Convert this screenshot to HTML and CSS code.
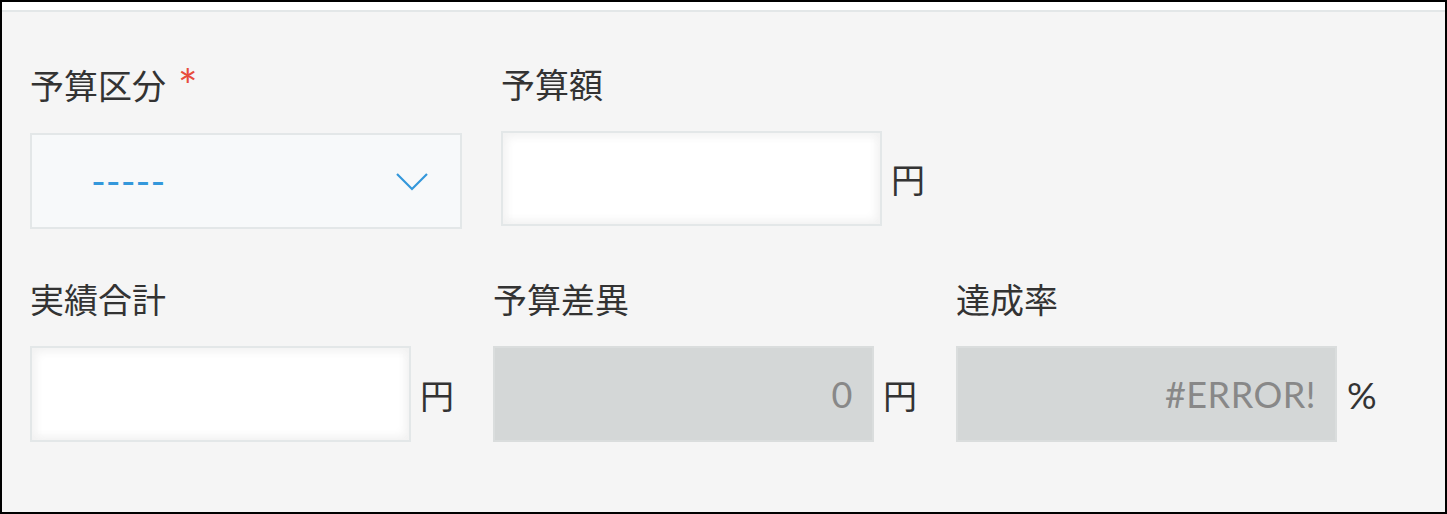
FILE: index.html
```html
<!DOCTYPE html>
<html lang="ja">
<head>
    <meta charset="UTF-8">
    <title>予算フォーム</title>
    <link rel="stylesheet" href="styles.css">
</head>
<body>
    <div class="frame">
        <div class="topbar"></div>
        <div class="form">
            <div class="row">
                <div class="field field-select">
                    <div class="label label-raised">予算区分<span class="required">*</span></div>
                    <div class="control">
                        <div class="select">
                            <span class="select-value">-----</span>
                            <svg class="chevron" width="32" height="18" viewBox="0 0 32 18">
                                <polyline points="1,1 16,16 31,1" fill="none" stroke="#3498db" stroke-width="2.2"/>
                            </svg>
                        </div>
                    </div>
                </div>
                <div class="field">
                    <div class="label">予算額</div>
                    <div class="control">
                        <div class="input input-short"></div>
                        <span class="unit">円</span>
                    </div>
                </div>
            </div>
            <div class="row row-second">
                <div class="field">
                    <div class="label">実績合計</div>
                    <div class="control">
                        <div class="input"></div>
                        <span class="unit">円</span>
                    </div>
                </div>
                <div class="field">
                    <div class="label">予算差異</div>
                    <div class="control">
                        <div class="input input-calc"><span class="value">0</span></div>
                        <span class="unit">円</span>
                    </div>
                </div>
                <div class="field">
                    <div class="label">達成率</div>
                    <div class="control">
                        <div class="input input-calc"><span class="value">#ERROR!</span></div>
                        <span class="unit unit-latin">%</span>
                    </div>
                </div>
            </div>
        </div>
    </div>
</body>
</html>
```

FILE: styles.css
```css
html, body {
    margin: 0;
    padding: 0;
}
body {
    font-family: "Noto Sans CJK JP", "Noto Sans", sans-serif;
    color: #333;
}
.frame {
    box-sizing: border-box;
    height: 514px;
    border: 2px solid #000;
    background: #f5f5f5;
}
.topbar {
    height: 8px;
    background: #fff;
    border-bottom: 2px solid #e3e7e8;
}
.form {
    padding: 52px 0 0 28px;
}
.row {
    display: flex;
    align-items: flex-start;
}
.row-second {
    margin-top: 50px;
}
.field {
    margin-right: 39px;
}
.label {
    font-size: 34px;
    line-height: 40px;
    height: 40px;
    margin-bottom: 27px;
    white-space: nowrap;
}
.label-raised {
    margin-top: -2px;
    margin-bottom: 31px;
}
.required {
    font-family: Lato, sans-serif;
    color: #e74c3c;
    margin-left: 12px;
    font-size: 46px;
    position: relative;
    top: 4px;
}
.control {
    display: flex;
    align-items: center;
}
.select {
    box-sizing: border-box;
    width: 432px;
    height: 96px;
    border: 2px solid #e3e7e8;
    background: #f7f9fa;
    display: flex;
    align-items: center;
    justify-content: space-between;
    padding: 0 32px 0 59px;
}
.select-value {
    font-family: Lato, sans-serif;
    color: #3498db;
    font-size: 40px;
    letter-spacing: 0;
}
.chevron {
    display: block;
    margin-top: 2px;
}
.input {
    box-sizing: border-box;
    width: 381px;
    height: 96px;
    border: 2px solid #e3e7e8;
    background: #fff;
    box-shadow: inset 4px 4px 8px #f2f2f2, inset -4px -4px 8px #f2f2f2;
    display: flex;
    align-items: center;
    justify-content: flex-end;
    padding-right: 19px;
}
.input-short {
    height: 95px;
}
.input-calc {
    background: #d4d7d7;
    border-color: #dadddd;
    box-shadow: none;
}
.value {
    font-family: Lato, sans-serif;
    font-size: 36px;
    letter-spacing: 0.5px;
    color: #888;
}
.unit {
    font-size: 34px;
    margin-left: 9px;
}
.unit-latin {
    font-family: Lato, sans-serif;
    font-size: 37px;
    margin-left: 10px;
}
```
